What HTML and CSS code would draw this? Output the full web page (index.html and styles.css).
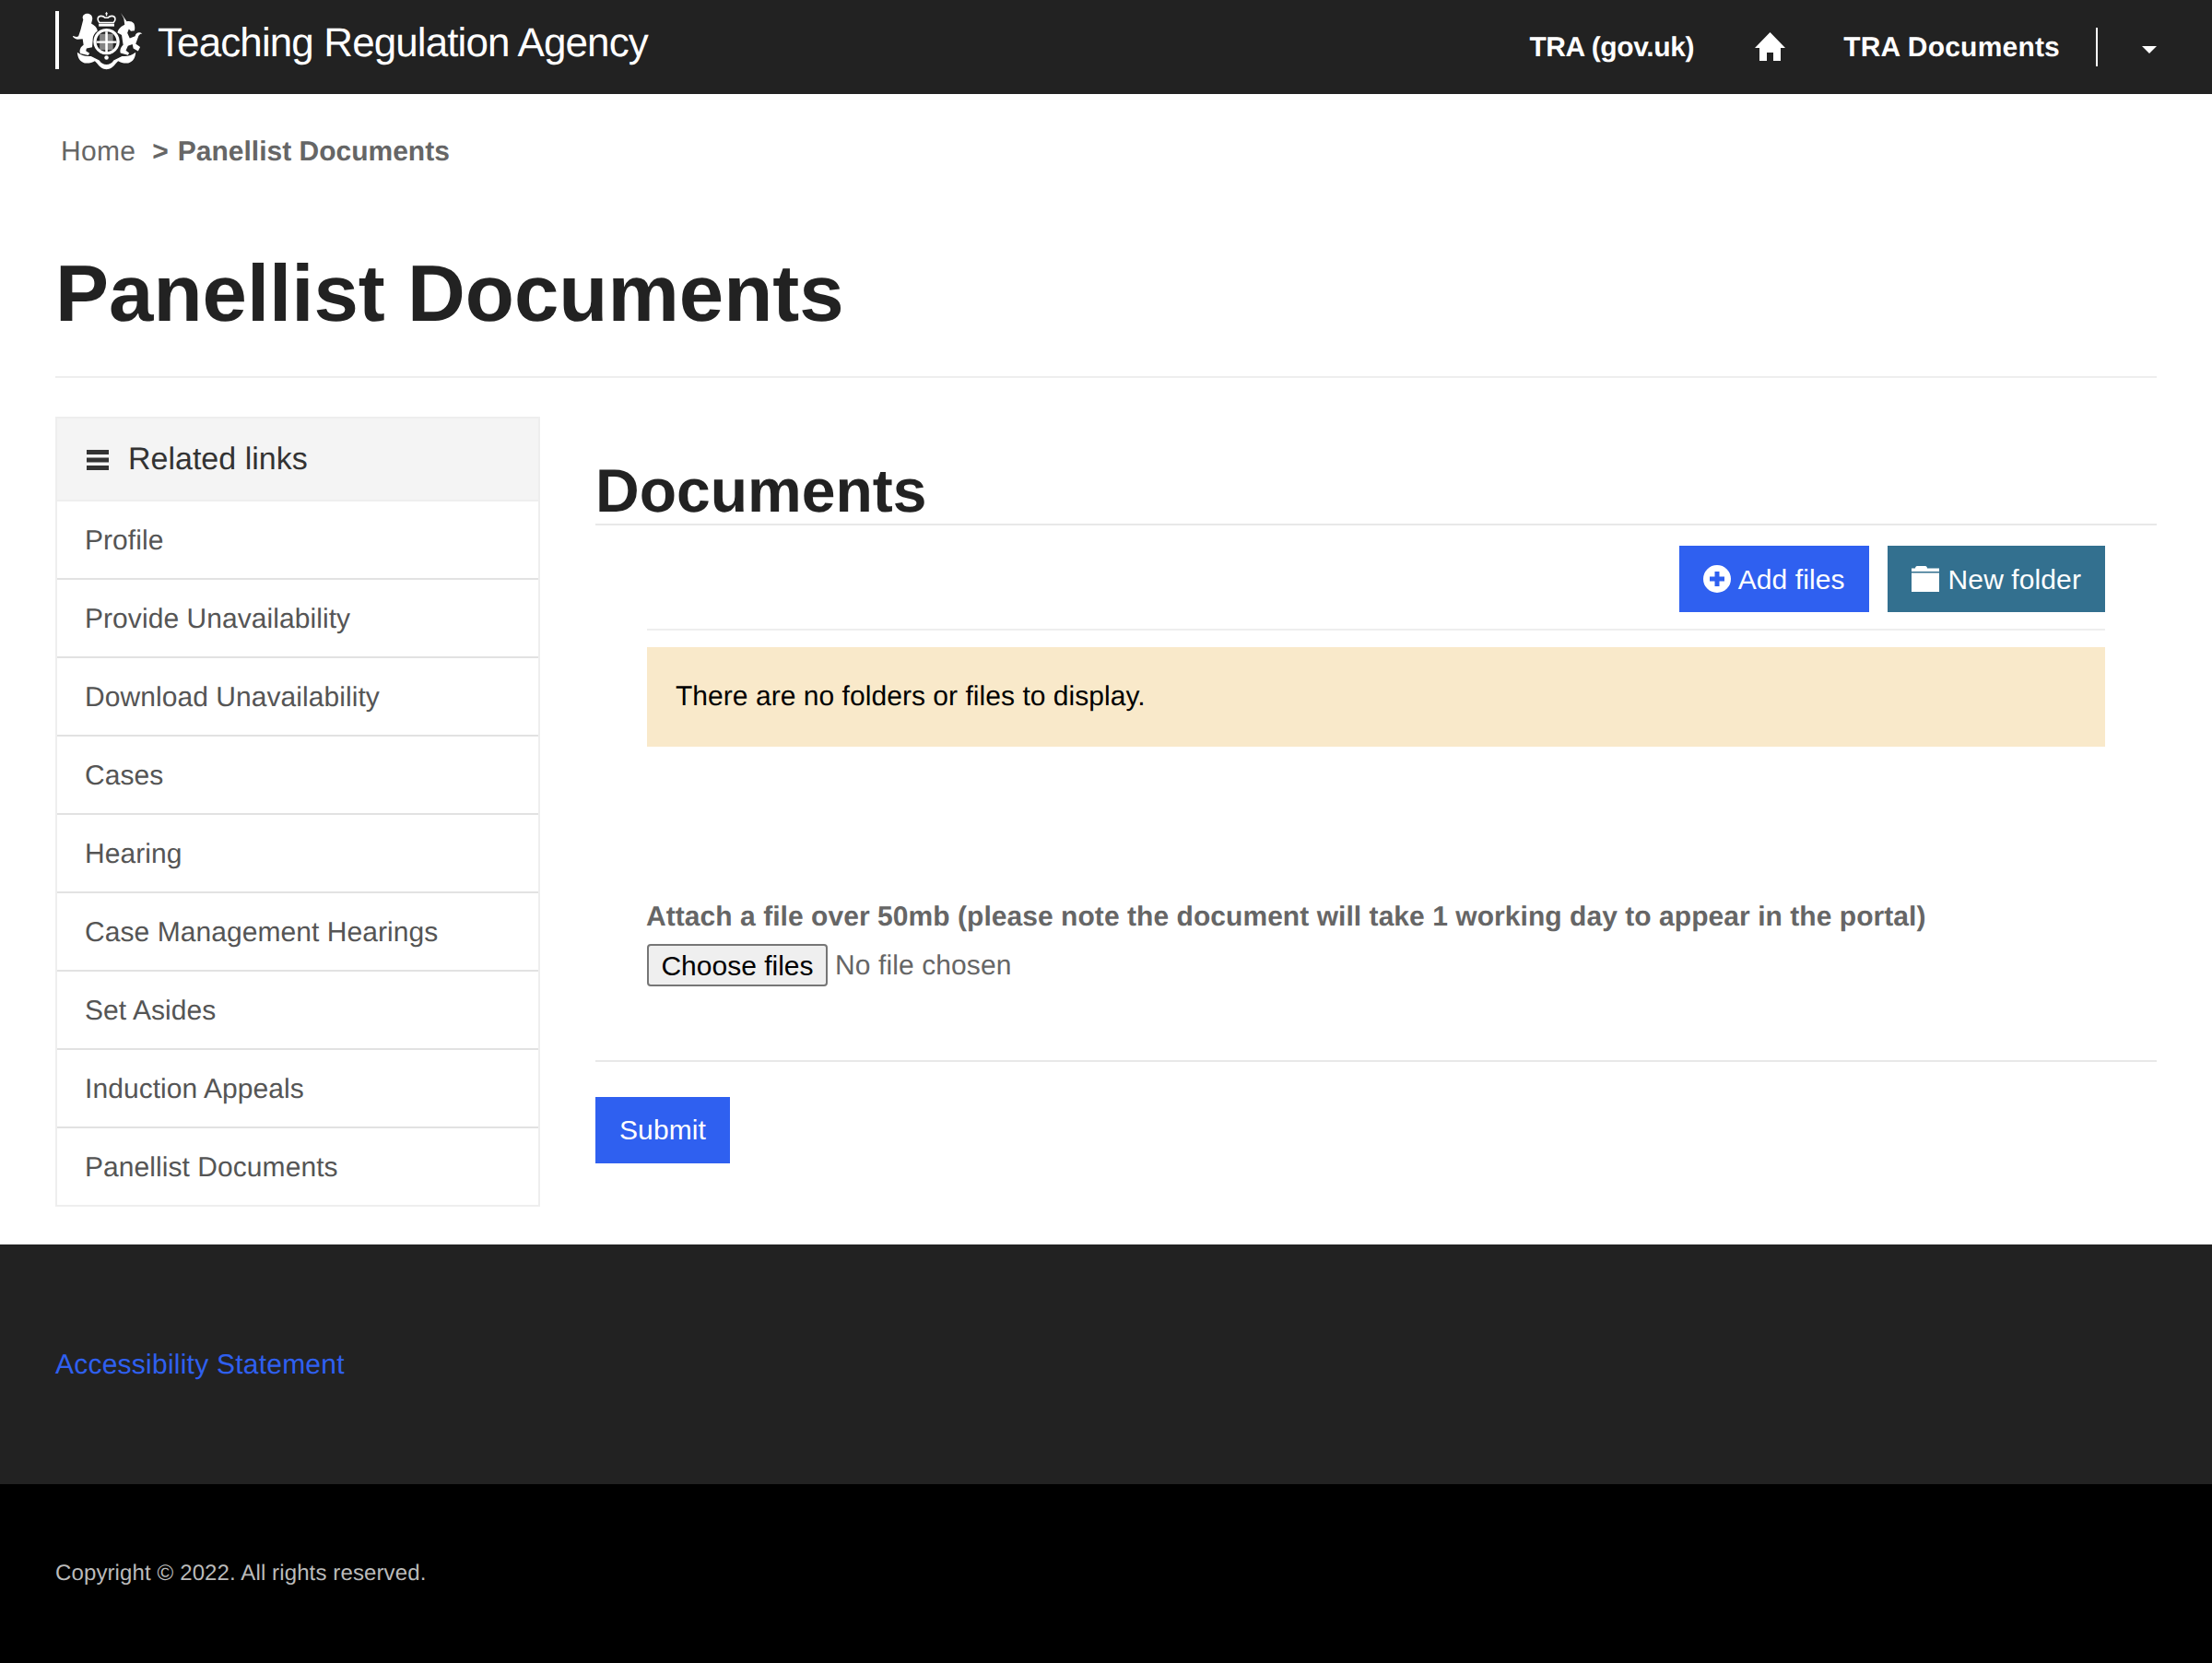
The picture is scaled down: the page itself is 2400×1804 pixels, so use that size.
FILE: index.html
```html
<!DOCTYPE html>
<html lang="en">
<head>
<meta charset="utf-8">
<title>Panellist Documents</title>
<link rel="stylesheet" href="styles.css">
</head>
<body>
<header class="topbar">
  <a class="brand" href="#">
    <span class="brand-rule"></span>
    <svg class="crest" viewBox="85 35 235 195" aria-hidden="true">
      <g fill="#fff">
        <path d="M198 36l4 6-2 3v5h-4v-5l-2-3z"/>
        <path d="M174 72c-9-9-6-22 6-22 6 0 10 2 13 6h10c3-4 7-6 13-6 12 0 15 13 6 22z" fill="none" stroke="#fff" stroke-width="5"/>
        <path d="M172 76h52v9h-52z"/>
        <path d="M198 92a44 44 0 1 0 .1 0zm0 10a34 34 0 1 1-.1 0z"/>
        <path d="M194 102h8v72h-8zM164 134h68v7h-68z"/>
        <path d="M175 110h45v54h-45z" opacity=".45"/>
        <path d="M120 62c-6-10 2-20 14-20 12 0 19 10 16 22l-3 11c12 6 20 15 21 25-10 7-17 19-16 31l-2 24-19 4-2 8 12 8-4 7-27-6c-5-12 2-24 11-29l-3-20-18 2c-7-3-14-6-16-12 8 3 15 4 20 1l7-21 9-35z"/>
        <path d="M246 40l20 28c9-2 19 0 24 7 3 7 4 16 2 24l-12 2-7-7-5 13 8 18 18-7c2-12 14-16 24-9-8 0-13 6-14 13l-8 21 15 11-7 14-16-9-3-14-15 5-7 16 11 8-4 7-25-7c-3-11 2-21 9-27l-5-33-14-8c2-13 13-22 24-27l-3-21z"/>
        <path d="M100 172c12 10 28 15 46 13l28 14c5 9 14 14 24 14s19-5 24-14l28-14c18 2 34-3 46-13-1 18-9 32-25 36-12 2-24-1-34-7l-8 9c-8 11-19 19-31 19s-23-8-31-19l-8-9c-10 6-22 9-34 7-16-4-24-18-25-36z"/>
        <circle cx="198" cy="190" r="7"/>
      </g>
    </svg>
    <span class="brand-name">Teaching Regulation Agency</span>
  </a>
  <nav class="topnav">
    <a class="topnav-link topnav-gov" href="#">TRA (gov.uk)</a>
    <a class="topnav-home" href="#" aria-label="Home">
      <svg viewBox="0 0 33 31" aria-hidden="true"><path d="M16.500 0L33 17h-5v14h-8V22h-7v9H5V17H0z" fill="#fff"/></svg>
    </a>
    <a class="topnav-link topnav-docs" href="#">TRA Documents</a>
    <span class="topnav-rule"></span>
    <span class="topnav-caret"></span>
  </nav>
</header>

<main class="page">
  <div class="breadcrumb"><a class="crumb-home" href="#">Home</a><span class="crumb-sep">&gt;</span><strong>Panellist Documents</strong></div>
  <h1 class="page-title">Panellist Documents</h1>
  <div class="columns">
    <aside class="sidebar">
      <div class="sidebar-head">
        <svg class="burger" viewBox="0 0 24 22" aria-hidden="true"><path d="M0 0h24v5H0zM0 8.500h24v5H0zM0 17h24v5H0z" fill="#333"/></svg>
        <span>Related links</span>
      </div>
      <a class="side-link" href="#">Profile</a>
      <a class="side-link" href="#">Provide Unavailability</a>
      <a class="side-link" href="#">Download Unavailability</a>
      <a class="side-link" href="#">Cases</a>
      <a class="side-link" href="#">Hearing</a>
      <a class="side-link" href="#">Case Management Hearings</a>
      <a class="side-link" href="#">Set Asides</a>
      <a class="side-link" href="#">Induction Appeals</a>
      <a class="side-link" href="#">Panellist Documents</a>
    </aside>
    <section class="content">
      <h2 class="section-title">Documents</h2>
      <div class="doc-panel">
        <div class="actions">
          <button class="btn btn-blue" type="button">
            <svg class="btn-icon" viewBox="0 0 30 30" aria-hidden="true"><path fill-rule="evenodd" d="M15 0a15 15 0 1 1 0 30a15 15 0 0 1 0-30zM12.500 7v5.500H7v5h5.500V23h5v-5.500H23v-5h-5.500V7z" fill="#fff"/></svg>Add files
          </button>
          <button class="btn btn-teal" type="button">
            <svg class="btn-icon-folder" viewBox="0 0 30 28" aria-hidden="true"><path d="M4 2.500c0-1.500 1-2.500 2-2.500h9c1 0 2 1 2 2.500H30v3.500H0V2.500zM0 7.500h30V28H0z" fill="#fff"/></svg>New folder
          </button>
        </div>
        <div class="alert">There are no folders or files to display.</div>
        <div class="upload">
          <label class="upload-label">Attach a file over 50mb (please note the document will take 1 working day to appear in the portal)</label>
          <div class="upload-row">
            <button class="file-btn" type="button">Choose files</button>
            <span class="file-note">No file chosen</span>
          </div>
        </div>
      </div>
      <div class="submit-row">
        <button class="btn btn-blue" type="button">Submit</button>
      </div>
    </section>
  </div>
</main>

<footer>
  <div class="footer-links"><a href="#">Accessibility Statement</a></div>
  <div class="footer-copy">Copyright © 2022. All rights reserved.</div>
</footer>
</body>
</html>
```

FILE: styles.css
```css
* { box-sizing: border-box; }
html, body { margin: 0; padding: 0; }
body {
  font-family: "Liberation Sans", Arial, sans-serif;
  font-size: 30px;
  color: #222;
  background: #fff;
  height: 1804px;
  display: flex;
  flex-direction: column;
  text-rendering: geometricPrecision;
}
a { text-decoration: none; color: inherit; }

.topbar {
  height: 102px;
  flex: none;
  background: #222;
  color: #fff;
  display: flex;
  justify-content: space-between;
  padding: 0 60px;
}
.brand { display: flex; align-items: flex-start; padding-top: 12px; }
.brand-rule { width: 4px; height: 63px; background: #fff; }
.crest { width: 76px; height: 64px; margin-left: 15px; }
.brand-name {
  font-size: 44px;
  line-height: 50px;
  margin-left: 16px;
  margin-top: 10px;
  letter-spacing: -0.9px;
}
.topnav { display: flex; align-items: flex-start; }
.topnav-link { font-weight: 700; line-height: 34px; margin-top: 35px; }
.topnav-gov { letter-spacing: -0.38px; }
.topnav-docs { letter-spacing: 0.2px; }
.topnav-home { margin: 35px 63.500px 0 65.500px; }
.topnav-home svg { display: block; width: 33px; height: 31px; }
.topnav-rule { width: 2px; height: 42px; background: #fff; margin: 30px 0 0 39px; }
.topnav-caret {
  margin: 50px 0 0 48px;
  border-left: 8px solid transparent;
  border-right: 8px solid transparent;
  border-top: 8px solid #fff;
}

.page { flex: none; height: 1248px; padding: 0 60px; }
.breadcrumb { padding: 44px 0 0 6px; height: 81px; line-height: 38px; color: #666; }
.crumb-home { letter-spacing: 0.3px; }
.crumb-sep { font-weight: 700; margin: 0 10px 0 18px; }
.page-title {
  margin: 0;
  height: 227px;
  padding-top: 86px;
  line-height: 100px;
  font-size: 87px;
  font-weight: 700;
  color: #222;
  border-bottom: 2px solid #eee;
}
.columns { display: flex; gap: 60px; margin-top: 42px; }

.sidebar {
  width: 526px;
  flex: none;
  border: 2px solid #eee;
  color: #555;
}
.sidebar-head {
  height: 90px;
  background: #f4f4f4;
  border-bottom: 2px solid #eee;
  color: #333;
  font-size: 34px;
  display: flex;
  align-items: center;
  padding: 1px 0 0 32px;
}
.burger { width: 24px; height: 22px; margin-right: 21px; }
.side-link {
  display: flex;
  align-items: center;
  height: 85px;
  padding: 2px 0 0 30px;
  letter-spacing: 0.06px;
  border-bottom: 2px solid #e2e2e2;
}
.side-link:last-child { height: 83px; border-bottom: 0; }

.content { flex: 1; min-width: 0; padding-top: 40px; }
.section-title {
  margin: 0;
  height: 78px;
  font-size: 66px;
  line-height: 81px;
  font-weight: 700;
  color: #222;
  border-bottom: 2px solid #e8e8e8;
}
.doc-panel { padding: 22px 56px 0; }
.actions {
  display: flex;
  justify-content: flex-end;
  gap: 20px;
  padding-bottom: 18px;
  border-bottom: 2px solid #eee;
}
.actions .btn { padding-top: 2px; }
.btn {
  height: 72px;
  border: 0;
  padding: 0 26px;
  font: inherit;
  letter-spacing: 0.1px;
  color: #fff;
  display: inline-flex;
  align-items: center;
}
.btn-blue { background: #2f60f0; }
.btn-teal { background: #33708f; }
.btn-icon { width: 30px; height: 30px; margin: -2px 8px 0 0; }
.btn-icon-folder { width: 30px; height: 28px; margin: -2px 10px 0 0; }
.alert {
  margin-top: 18px;
  height: 108px;
  padding-left: 31px;
  display: flex;
  align-items: center;
  background: #f9e9ca;
  color: #000;
  letter-spacing: 0.04px;
}
.upload { padding-top: 164px; }
.upload-label {
  display: block;
  margin-left: -1px;
  font-weight: 700;
  color: #666;
  line-height: 41px;
  letter-spacing: 0.05px;
}
.upload-row { display: flex; align-items: center; margin-top: 9px; }
.file-btn {
  width: 196px;
  height: 46px;
  padding: 1px 0 0;
  font: inherit;
  color: #000;
  background: #efefef;
  border: 2px solid #767676;
  border-radius: 4px;
}
.file-note { margin-left: 8px; padding-top: 2px; color: #666; letter-spacing: 0.1px; }
.submit-row { margin-top: 80px; border-top: 2px solid #e8e8e8; padding-top: 38px; }

footer { flex: 1; display: flex; flex-direction: column; }
.footer-links {
  height: 260px;
  background: #222;
  color: #2f60f0;
  padding: 111px 0 0 60px;
  line-height: 40px;
  letter-spacing: 0.23px;
}
.footer-copy {
  flex: 1;
  background: #000;
  color: #bbb;
  font-size: 24px;
  padding: 80px 0 0 60px;
  line-height: 34px;
  letter-spacing: 0.12px;
}
```
